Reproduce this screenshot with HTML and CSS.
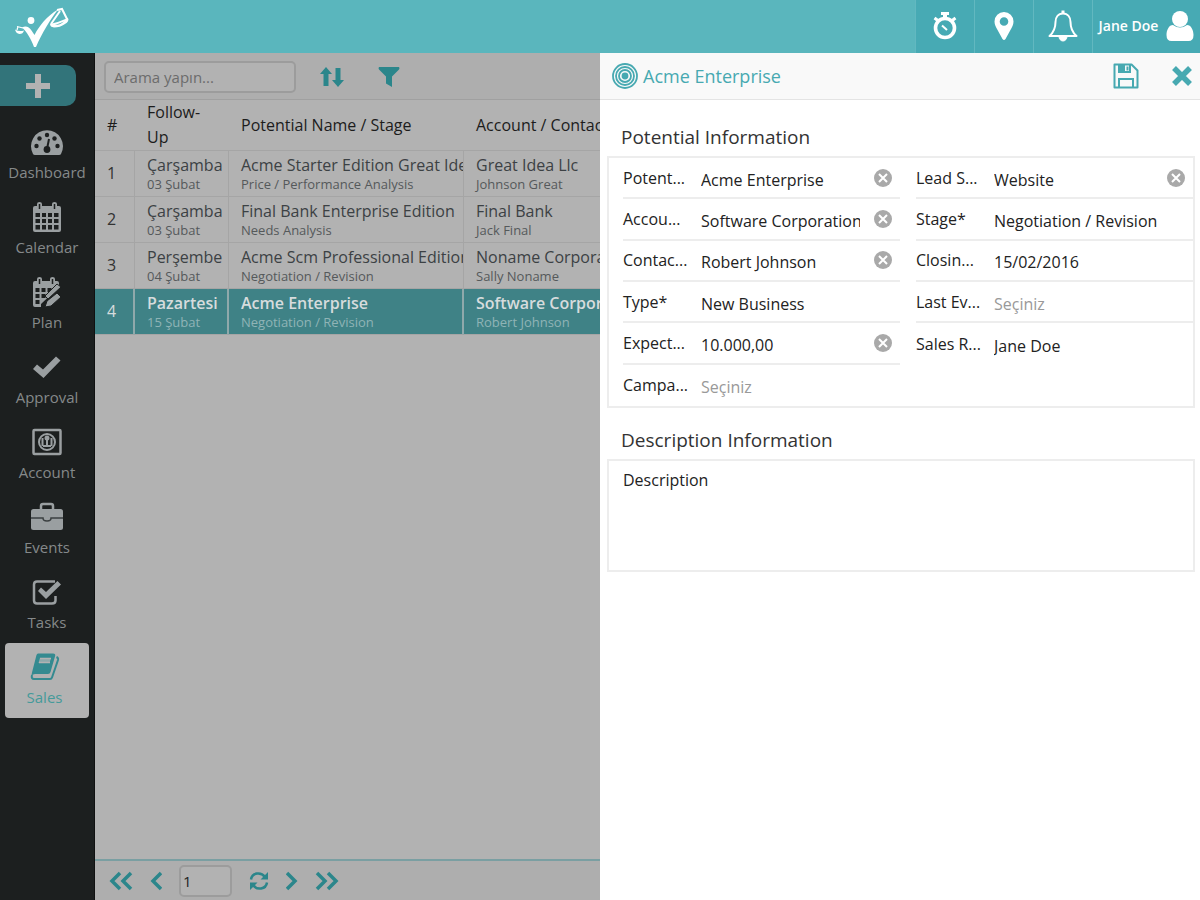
FILE: index.html
```html
<!DOCTYPE html>
<html lang="tr">
<head>
    <meta charset="UTF-8">
    <meta name="viewport" content="width=device-width, initial-scale=1.0">
    <title>Acme Enterprise</title>
    <link rel="stylesheet" href="styles.css">
</head>
<body>
    <header class="topbar">
        <a href="#" class="logo" aria-label="Home">
            <svg width="56" height="42" viewBox="0 0 56 42" fill="#fff">
                <circle cx="17" cy="14.500" r="3.400"/>
                <path d="M8 21.500C12 19.500 15 21 17.500 24.500L20.500 29C25 20 33 10 44 3.500C36 14 28 27 22 41H20C17 33 13 26 8 21.500Z"/>
                <path d="M9 22L3 20.500M4 20.500L3 24" fill="none" stroke="#fff" stroke-width="1.200"/>
                <path d="M1 23.500Q5 26 10 24.500Q9 28 5.500 28Q2 27.500 1 23.500Z"/>
                <path d="M43 4L48 3L53.500 14M46 5L37 18" fill="none" stroke="#fff" stroke-width="2"/>
                <path d="M36 18Q45 16 54 12Q55.500 15.500 51 18Q46 21.500 40 21.500Q36 21 36 18ZM41 19Q46 19 50 15.500Q46 17 41 19Z" fill-rule="evenodd"/>
            </svg>
        </a>
        <nav class="top-actions">
            <button class="top-btn" aria-label="Timer">
                <svg width="26" height="30" viewBox="0 0 26 30" fill="none" stroke="#fff">
                    <circle cx="13" cy="17" r="9.500" stroke-width="3.600"/>
                    <path d="M9 2.500h8" stroke-width="3"/>
                    <path d="M13 3v5" stroke-width="4"/>
                    <path d="M2.500 7l4 3M23.500 7l-4 3" stroke-width="3"/>
                    <path d="M10 14.500l5 4.500" stroke-width="2"/>
                </svg>
            </button>
            <button class="top-btn" aria-label="Location">
                <svg width="20" height="30" viewBox="0 0 20 30" fill="#fff">
                    <path fill-rule="evenodd" d="M10 1a9.500 9.500 0 0 1 9.500 9.500c0 3-1.500 5.500-2.500 7.500L11.500 28q-1.500 2-3 0L3 18C2 16 .5 13.500.5 10.500A9.500 9.500 0 0 1 10 1zm0 5.200a4.300 4.300 0 1 0 0 8.600 4.300 4.300 0 0 0 0-8.600z"/>
                </svg>
            </button>
            <button class="top-btn" aria-label="Notifications">
                <svg width="32" height="34" viewBox="0 0 32 34" fill="none" stroke="#fff" stroke-width="2" stroke-linejoin="round">
                    <path d="M16 4.500c-5 0-7.500 4-7.500 8.500 0 7-2 10.500-6 14h27c-4-3.500-6-7-6-14 0-4.500-2.500-8.500-7.500-8.500z"/>
                    <path d="M16 1.500v3" stroke-width="3"/>
                    <path d="M12 27.500a4 4.500 0 0 0 8 0z" fill="#fff" stroke-width="1"/>
                </svg>
            </button>
            <button class="top-btn user-btn">
                <span>Jane Doe</span>
                <svg width="28" height="32" viewBox="0 0 28 32" fill="#fff">
                    <circle cx="14" cy="9" r="8"/>
                    <path d="M7 15q7 5 14 0c4 0 6.500 5 6.500 10q0 6-5 6h-17q-5 0-5-6c0-5 2.500-10 6.500-10z"/>
                </svg>
            </button>
        </nav>
    </header>

    <div class="main">
        <aside class="sidebar">
            <button class="add-btn" aria-label="Add">
                <svg width="26" height="26" viewBox="0 0 26 26"><path d="M10 1h6v9h9v6h-9v9h-6v-9H1v-6h9z" fill="#b2b2b2"/></svg>
            </button>
            <nav class="menu">
                <a href="#" class="menu-item">
                    <svg width="34" height="30" viewBox="0 0 34 30">
                        <path d="M3 27A16 16 0 1 1 31 27Q30.500 28 29 28H5Q3.500 28 3 27z" fill="#9a9fa1"/>
                        <g fill="#1c1f1f"><circle cx="6.500" cy="19" r="2.200"/><circle cx="9.500" cy="11.500" r="2.200"/><circle cx="17" cy="8" r="2.200"/><circle cx="24.500" cy="11.500" r="2.200"/><circle cx="27.500" cy="19" r="2.200"/><circle cx="17" cy="22.500" r="3.400"/></g>
                        <path d="M17 22l2-10" stroke="#1c1f1f" stroke-width="2"/>
                    </svg>
                    <span>Dashboard</span>
                </a>
                <a href="#" class="menu-item">
                    <svg width="30" height="32" viewBox="0 0 30 32">
                        <path d="M1 7q0-2 2-2h24q2 0 2 2v22q0 2-2 2H3q-2 0-2-2z" fill="#9a9fa1"/>
                        <path d="M5 7V3q0-2 2.500-2T10 3v4zM20 7V3q0-2 2.500-2T25 3v4z" fill="#9a9fa1"/>
                        <path d="M7.500 3v5M22.500 3v5" stroke="#1c1f1f" stroke-width="1.500"/>
                        <path d="M3.500 12h4.500v4H3.500zM10 12h4v4h-4zM16 12h4v4h-4zM22 12h4.500v4H22zM3.500 18h4.500v4H3.500zM10 18h4v4h-4zM16 18h4v4h-4zM22 18h4.500v4H22zM3.500 24h4.500v4.500H3.500zM10 24h4v4.500h-4zM16 24h4v4.500h-4zM22 24h4.500v4.500H22z" fill="#1c1f1f"/>
                    </svg>
                    <span>Calendar</span>
                </a>
                <a href="#" class="menu-item">
                    <svg width="30" height="32" viewBox="0 0 30 32">
                        <path d="M1 7q0-2 2-2h22q2 0 2 2v4L9 28v3H3q-2 0-2-2z" fill="#9a9fa1"/>
                        <path d="M5 7V3q0-2 2.500-2T10 3v4zM18 7V3q0-2 2.500-2T23 3v4z" fill="#9a9fa1"/>
                        <path d="M7.500 3v5M20.500 3v5" stroke="#1c1f1f" stroke-width="1.500"/>
                        <path d="M3.500 12h4v4h-4zM9.500 12h4v4h-4zM15.500 12h4v4h-4zM3.500 18h4v4h-4zM9.500 18h4v4h-4zM3.500 24h4v4h-4z" fill="#1c1f1f"/>
                        <path d="M13 20L25 8l4 3-13 12z" fill="#9a9fa1" stroke="#1c1f1f"/>
                        <path d="M13 31l2-6 10-8 4 4-10 9z" fill="#9a9fa1" stroke="#1c1f1f"/>
                    </svg>
                    <span>Plan</span>
                </a>
                <a href="#" class="menu-item">
                    <svg width="30" height="26" viewBox="0 0 30 26"><path d="M1 15l4-4.500 6 5L24 2.500l4.500 4L11.500 24z" fill="#9a9fa1"/></svg>
                    <span>Approval</span>
                </a>
                <a href="#" class="menu-item">
                    <svg width="30" height="28" viewBox="0 0 30 28" fill="none" stroke="#9a9fa1">
                        <rect x="1.500" y="2" width="27" height="24" rx="1" stroke-width="2.500"/>
                        <circle cx="15" cy="14" r="8" stroke-width="2"/>
                        <circle cx="15" cy="10" r="2.500" fill="#9a9fa1" stroke="none"/>
                        <path d="M10.500 10v8M19.500 10v8M11 18h8M15 11v7" stroke-width="2"/>
                    </svg>
                    <span>Account</span>
                </a>
                <a href="#" class="menu-item">
                    <svg width="34" height="30" viewBox="0 0 34 30">
                        <path d="M11 7V4q0-2 2-2h8q2 0 2 2v3" fill="none" stroke="#9a9fa1" stroke-width="2.500"/>
                        <rect x="1" y="7" width="32" height="21" rx="2.500" fill="#9a9fa1"/>
                        <path d="M1 16h12q0 3 4 3t4-3h12" fill="none" stroke="#3b4041" stroke-width="1.500"/>
                        <path d="M14.500 15h5v2.500h-5z" fill="#9a9fa1"/>
                    </svg>
                    <span>Events</span>
                </a>
                <a href="#" class="menu-item">
                    <svg width="30" height="28" viewBox="0 0 30 28">
                        <path d="M23 3.500H5Q2 3.500 2 6.500v16q0 3 3 3h15q3.500 0 3.500-3V18" fill="none" stroke="#9a9fa1" stroke-width="2.500"/>
                        <path d="M6 13l3-3.500 5 4.500L25.500 3 29 6.500 14 21z" fill="#9a9fa1"/>
                    </svg>
                    <span>Tasks</span>
                </a>
                <a href="#" class="menu-item active">
                    <svg width="32" height="30" viewBox="0 0 32 30">
                        <path d="M3 23q-1 4 2 4h16q1.500 0 2-1.500L29 8q.5-2-1.500-3" fill="none" stroke="#348a90" stroke-width="2"/>
                        <path d="M9 1.500h15q3 0 2 3L21.500 20q-.5 2-2.500 2H6q-2 0-3.500 1.500l.5-3L7.500 3q.5-1.500 1.500-1.500z" fill="#348a90"/>
                        <path d="M11 6h11l-1.500 5h-11z" fill="#8fa9ab"/>
                        <path d="M11 6.500h11M10 10.500h11" stroke="#b2b2b2" stroke-width="1.500"/>
                    </svg>
                    <span>Sales</span>
                </a>
            </nav>
        </aside>

        <section class="list">
            <div class="toolbar">
                <input type="text" class="search" placeholder="Arama yapın..." aria-label="Arama yapın...">
                <button class="icon-btn" aria-label="Sort">
                    <svg width="24" height="20" viewBox="0 0 24 20" fill="#2b868b"><path d="M6 0l6 7H8.500v12h-5V7H0zM18 20l-6-7h3.500V1h5v12H24z"/></svg>
                </button>
                <button class="icon-btn" aria-label="Filter">
                    <svg width="22" height="22" viewBox="0 0 22 22" fill="#2b868b"><path d="M1 1h20q1 1 0 2.500L14 10.500V21l-6-3.500v-7L1 3.500Q0 2 1 1z"/></svg>
                </button>
            </div>
            <div class="table-wrap">
                <table class="records">
                    <thead>
                        <tr><th class="col-no">#</th><th class="col-date">Follow-Up</th><th class="col-name">Potential Name / Stage</th><th class="col-account">Account / Contact</th></tr>
                    </thead>
                    <tbody>
                        <tr><td class="no">1</td><td>Çarşamba<small>03 Şubat</small></td><td>Acme Starter Edition Great Idea<small>Price / Performance Analysis</small></td><td>Great Idea Llc<small>Johnson Great</small></td></tr>
                        <tr><td class="no">2</td><td>Çarşamba<small>03 Şubat</small></td><td>Final Bank Enterprise Edition<small>Needs Analysis</small></td><td>Final Bank<small>Jack Final</small></td></tr>
                        <tr><td class="no">3</td><td>Perşembe<small>04 Şubat</small></td><td>Acme Scm Professional Edition<small>Negotiation / Revision</small></td><td>Noname Corporation<small>Sally Noname</small></td></tr>
                        <tr class="selected"><td class="no">4</td><td>Pazartesi<small>15 Şubat</small></td><td>Acme Enterprise<small>Negotiation / Revision</small></td><td>Software Corporation<small>Robert Johnson</small></td></tr>
                    </tbody>
                </table>
            </div>
            <footer class="pager">
                <button class="icon-btn" aria-label="First page">
                    <svg width="24" height="20" viewBox="0 0 24 20" fill="none" stroke="#2b868b" stroke-width="3.500"><path d="M11 2l-8 8 8 8M22 2l-8 8 8 8"/></svg>
                </button>
                <button class="icon-btn" aria-label="Previous page">
                    <svg width="12" height="20" viewBox="0 0 12 20" fill="none" stroke="#2b868b" stroke-width="3.500"><path d="M11 2l-8 8 8 8"/></svg>
                </button>
                <input type="text" class="page-no" value="1" aria-label="Page">
                <button class="icon-btn" aria-label="Refresh">
                    <svg width="20" height="20" viewBox="0 0 20 20" fill="none" stroke="#2b868b" stroke-width="2.500"><path d="M2 8.500C3 1.500 12 .5 16 6M18 11.500C17 18.500 8 19.500 4 14"/><path d="M19 1v7.500h-7.500zM1 19v-7.500h7.500z" fill="#2b868b" stroke="none"/></svg>
                </button>
                <button class="icon-btn" aria-label="Next page">
                    <svg width="12" height="20" viewBox="0 0 12 20" fill="none" stroke="#2b868b" stroke-width="3.500"><path d="M1 2l8 8-8 8"/></svg>
                </button>
                <button class="icon-btn" aria-label="Last page">
                    <svg width="24" height="20" viewBox="0 0 24 20" fill="none" stroke="#2b868b" stroke-width="3.500"><path d="M2 2l8 8-8 8M13 2l8 8-8 8"/></svg>
                </button>
            </footer>
        </section>

        <section class="panel">
            <div class="panel-head">
                <svg width="26" height="26" viewBox="0 0 26 26" fill="none" stroke="#47a9b1" stroke-width="1.800">
                    <circle cx="13" cy="13" r="12"/><circle cx="13" cy="13" r="9"/><circle cx="13" cy="13" r="6"/><circle cx="13" cy="13" r="2.500" fill="#47a9b1"/>
                </svg>
                <h1>Acme Enterprise</h1>
                <button class="icon-btn" aria-label="Save">
                    <svg width="26" height="26" viewBox="0 0 26 26" fill="none" stroke="#47a9b1" stroke-width="2">
                        <path d="M1.500 1.500h17l6 6v17h-23z" stroke-linejoin="round"/>
                        <path d="M6 2v7h11V2M6 24v-8h14v8"/>
                        <path d="M7 2h4v6H7zM14.500 3.500v4" fill="#47a9b1"/>
                    </svg>
                </button>
                <button class="icon-btn" aria-label="Close">
                    <svg width="20" height="20" viewBox="0 0 20 20" stroke="#47a9b1" stroke-width="5.500"><path d="M2 2l16 16M18 2L2 18"/></svg>
                </button>
            </div>
            <form class="panel-body">
                <h2>Potential Information</h2>
                <div class="card fields">
                    <div class="field"><label for="name">Potent...</label><input type="text" id="name" value="Acme Enterprise"><button type="button" class="clear" aria-label="Clear"><svg width="18" height="18" viewBox="0 0 18 18"><circle cx="9" cy="9" r="9" fill="#a9a9a9"/><path d="M5 5l8 8M13 5l-8 8" stroke="#fff" stroke-width="2"/></svg></button></div>
                    <div class="field"><label for="lead">Lead S...</label><input type="text" id="lead" value="Website"><button type="button" class="clear" aria-label="Clear"><svg width="18" height="18" viewBox="0 0 18 18"><circle cx="9" cy="9" r="9" fill="#a9a9a9"/><path d="M5 5l8 8M13 5l-8 8" stroke="#fff" stroke-width="2"/></svg></button></div>
                    <div class="field"><label for="account">Accou...</label><input type="text" id="account" value="Software Corporation"><button type="button" class="clear" aria-label="Clear"><svg width="18" height="18" viewBox="0 0 18 18"><circle cx="9" cy="9" r="9" fill="#a9a9a9"/><path d="M5 5l8 8M13 5l-8 8" stroke="#fff" stroke-width="2"/></svg></button></div>
                    <div class="field"><label for="stage">Stage*</label><select id="stage"><option>Negotiation / Revision</option></select></div>
                    <div class="field"><label for="contact">Contac...</label><input type="text" id="contact" value="Robert Johnson"><button type="button" class="clear" aria-label="Clear"><svg width="18" height="18" viewBox="0 0 18 18"><circle cx="9" cy="9" r="9" fill="#a9a9a9"/><path d="M5 5l8 8M13 5l-8 8" stroke="#fff" stroke-width="2"/></svg></button></div>
                    <div class="field"><label for="closing">Closin...</label><input type="text" id="closing" value="15/02/2016"></div>
                    <div class="field"><label for="type">Type*</label><select id="type"><option>New Business</option></select></div>
                    <div class="field"><label for="event">Last Ev...</label><input type="text" id="event" placeholder="Seçiniz"></div>
                    <div class="field"><label for="expected">Expect...</label><input type="text" id="expected" value="10.000,00"><button type="button" class="clear" aria-label="Clear"><svg width="18" height="18" viewBox="0 0 18 18"><circle cx="9" cy="9" r="9" fill="#a9a9a9"/><path d="M5 5l8 8M13 5l-8 8" stroke="#fff" stroke-width="2"/></svg></button></div>
                    <div class="field last"><label for="rep">Sales R...</label><input type="text" id="rep" value="Jane Doe"></div>
                    <div class="field last"><label for="campaign">Campa...</label><input type="text" id="campaign" placeholder="Seçiniz"></div>
                </div>
                <h2>Description Information</h2>
                <div class="card description">
                    <label for="description">Description</label>
                    <textarea id="description"></textarea>
                </div>
            </form>
        </section>
    </div>
</body>
</html>
```

FILE: styles.css
```css
* { box-sizing: border-box; }
body { margin: 0; height: 100vh; display: flex; flex-direction: column; font-family: "Open Sans", sans-serif; font-size: 16px; color: #222; overflow: hidden; }
button, input, select, textarea { font: inherit; color: inherit; }
button { background: none; border: none; padding: 0; cursor: pointer; }
svg { display: block; flex: none; }
a { text-decoration: none; }

/* top bar */
.topbar { height: 53px; flex: none; display: flex; justify-content: space-between; background: #5ab6bd; }
.logo { padding: 6px 14px; }
.top-actions { display: flex; background: #47aab4; }
.top-btn { width: 59px; padding-bottom: 2px; display: flex; align-items: center; justify-content: center; border-left: 1px solid #62b8c0; }
.user-btn { width: 108px; gap: 8px; color: #fff; font-size: 14px; font-weight: 600; white-space: nowrap; }

.main { flex: 1; min-height: 0; display: flex; }

/* left menu */
.sidebar { width: 95px; flex: none; background: #1c1f1f; padding-top: 12px; border-right: 1px solid #101111; }
.add-btn { width: 76px; height: 41px; display: flex; align-items: center; justify-content: center; background: #32747a; border-radius: 0 10px 10px 0; }
.menu { margin-top: 12px; padding: 0 5px; display: flex; flex-direction: column; }
.menu-item { height: 75px; padding-top: 4px; display: flex; flex-direction: column; align-items: center; color: #85898a; font-size: 15px; line-height: 20px; border-radius: 4px; }
.menu-item svg { margin: auto; }
.menu-item span { margin-bottom: 11px; }
.menu-item.active { padding-right: 5px; background: #b2b2b2; color: #459a9a; }

/* record list */
.list { flex: 1; min-width: 0; display: flex; flex-direction: column; background: #b2b2b2; color: #222; }
.toolbar { height: 47px; flex: none; display: flex; align-items: center; gap: 34px; padding: 2px 9px 0; background: #aeaeae; border-bottom: 1px solid #a0a0a0; }
.search { width: 192px; height: 32px; margin-right: -10px; padding: 0 8px; background: #b2b2b2; border: 2px solid #9c9c9c; border-radius: 5px; font-size: 15px; }
.search::placeholder { color: #6c6c6c; }
.table-wrap { flex: 1; min-height: 0; overflow: hidden; }
.records { width: 604px; table-layout: fixed; border-collapse: separate; border-spacing: 0; }
.col-no { width: 40px; }
.col-date { width: 94px; }
.col-name { width: 235px; }
.records th { height: 50px; padding: 0 0 0 12px; text-align: left; font-weight: 400; line-height: 25px; color: #1c1c1c; border-bottom: 1px solid #a5a5a5; }
.records th.col-date { padding-right: 12px; }
.records td { height: 46px; padding: 0 0 1px 12px; border-right: 1px solid #a5a5a5; border-bottom: 1px solid #a5a5a5; white-space: nowrap; overflow: hidden; line-height: 22px; color: #3c4144; }
.records small { display: block; font-size: 13px; line-height: 17px; color: #55595b; }
.records .no { color: #333; }
.records .selected td { background: #3f8286; border-right: 2px solid #8fa9ab; color: #d6dcdd; font-weight: 600; }
.records .selected .no { font-weight: 400; }
.records .selected small { color: #8fb4b6; font-weight: 400; }
.pager { height: 41px; flex: none; display: flex; align-items: center; gap: 17px; padding: 0 14px; border-top: 2px solid #7a9fa2; background: #aeaeae; }
.page-no { width: 53px; height: 32px; padding: 0 2px; background: #b2b2b2; border: 2px solid #9c9c9c; border-radius: 5px; font-size: 15px; }

/* detail panel */
.panel { width: 50%; flex: none; background: #fff; }
.panel-head { height: 47px; display: flex; align-items: center; gap: 5px; padding: 0 8px 0 12px; background: #f9f9f9; border-bottom: 1px solid #e4e4e4; }
.panel-head h1 { flex: 1; margin: 0; font-size: 18px; font-weight: 400; color: #47a9b1; }
.panel-head .icon-btn + .icon-btn { margin-left: 28px; }
.panel-body { padding: 16px 5px 0 7px; }
.panel-body h2 { margin: 0; padding: 0 14px; height: 40px; line-height: 42px; font-size: 19px; font-weight: 400; color: #333; }
.card { border: 2px solid #ededed; }
.fields { min-height: 252px; margin-bottom: 11px; display: grid; grid-template-columns: 1fr 1fr; grid-auto-rows: 1fr; column-gap: 16px; padding-left: 14px; }
.field { min-width: 0; display: flex; align-items: center; border-bottom: 2px solid #ededed; }
.field.last { border-bottom: none; }
.field label { width: 78px; flex: none; }
.field input, .field select { flex: 1; min-width: 0; height: 32px; margin-right: 14px; padding: 4px 0 0; border: none; background: none; appearance: none; }
.field input::placeholder { color: #999; opacity: 1; }
.clear { margin-right: 8px; }
.description { padding: 7px 14px 9px; }
.description label { display: block; line-height: 24px; }
.description textarea { display: block; width: 100%; height: 69px; border: none; resize: none; background: none; }
```
